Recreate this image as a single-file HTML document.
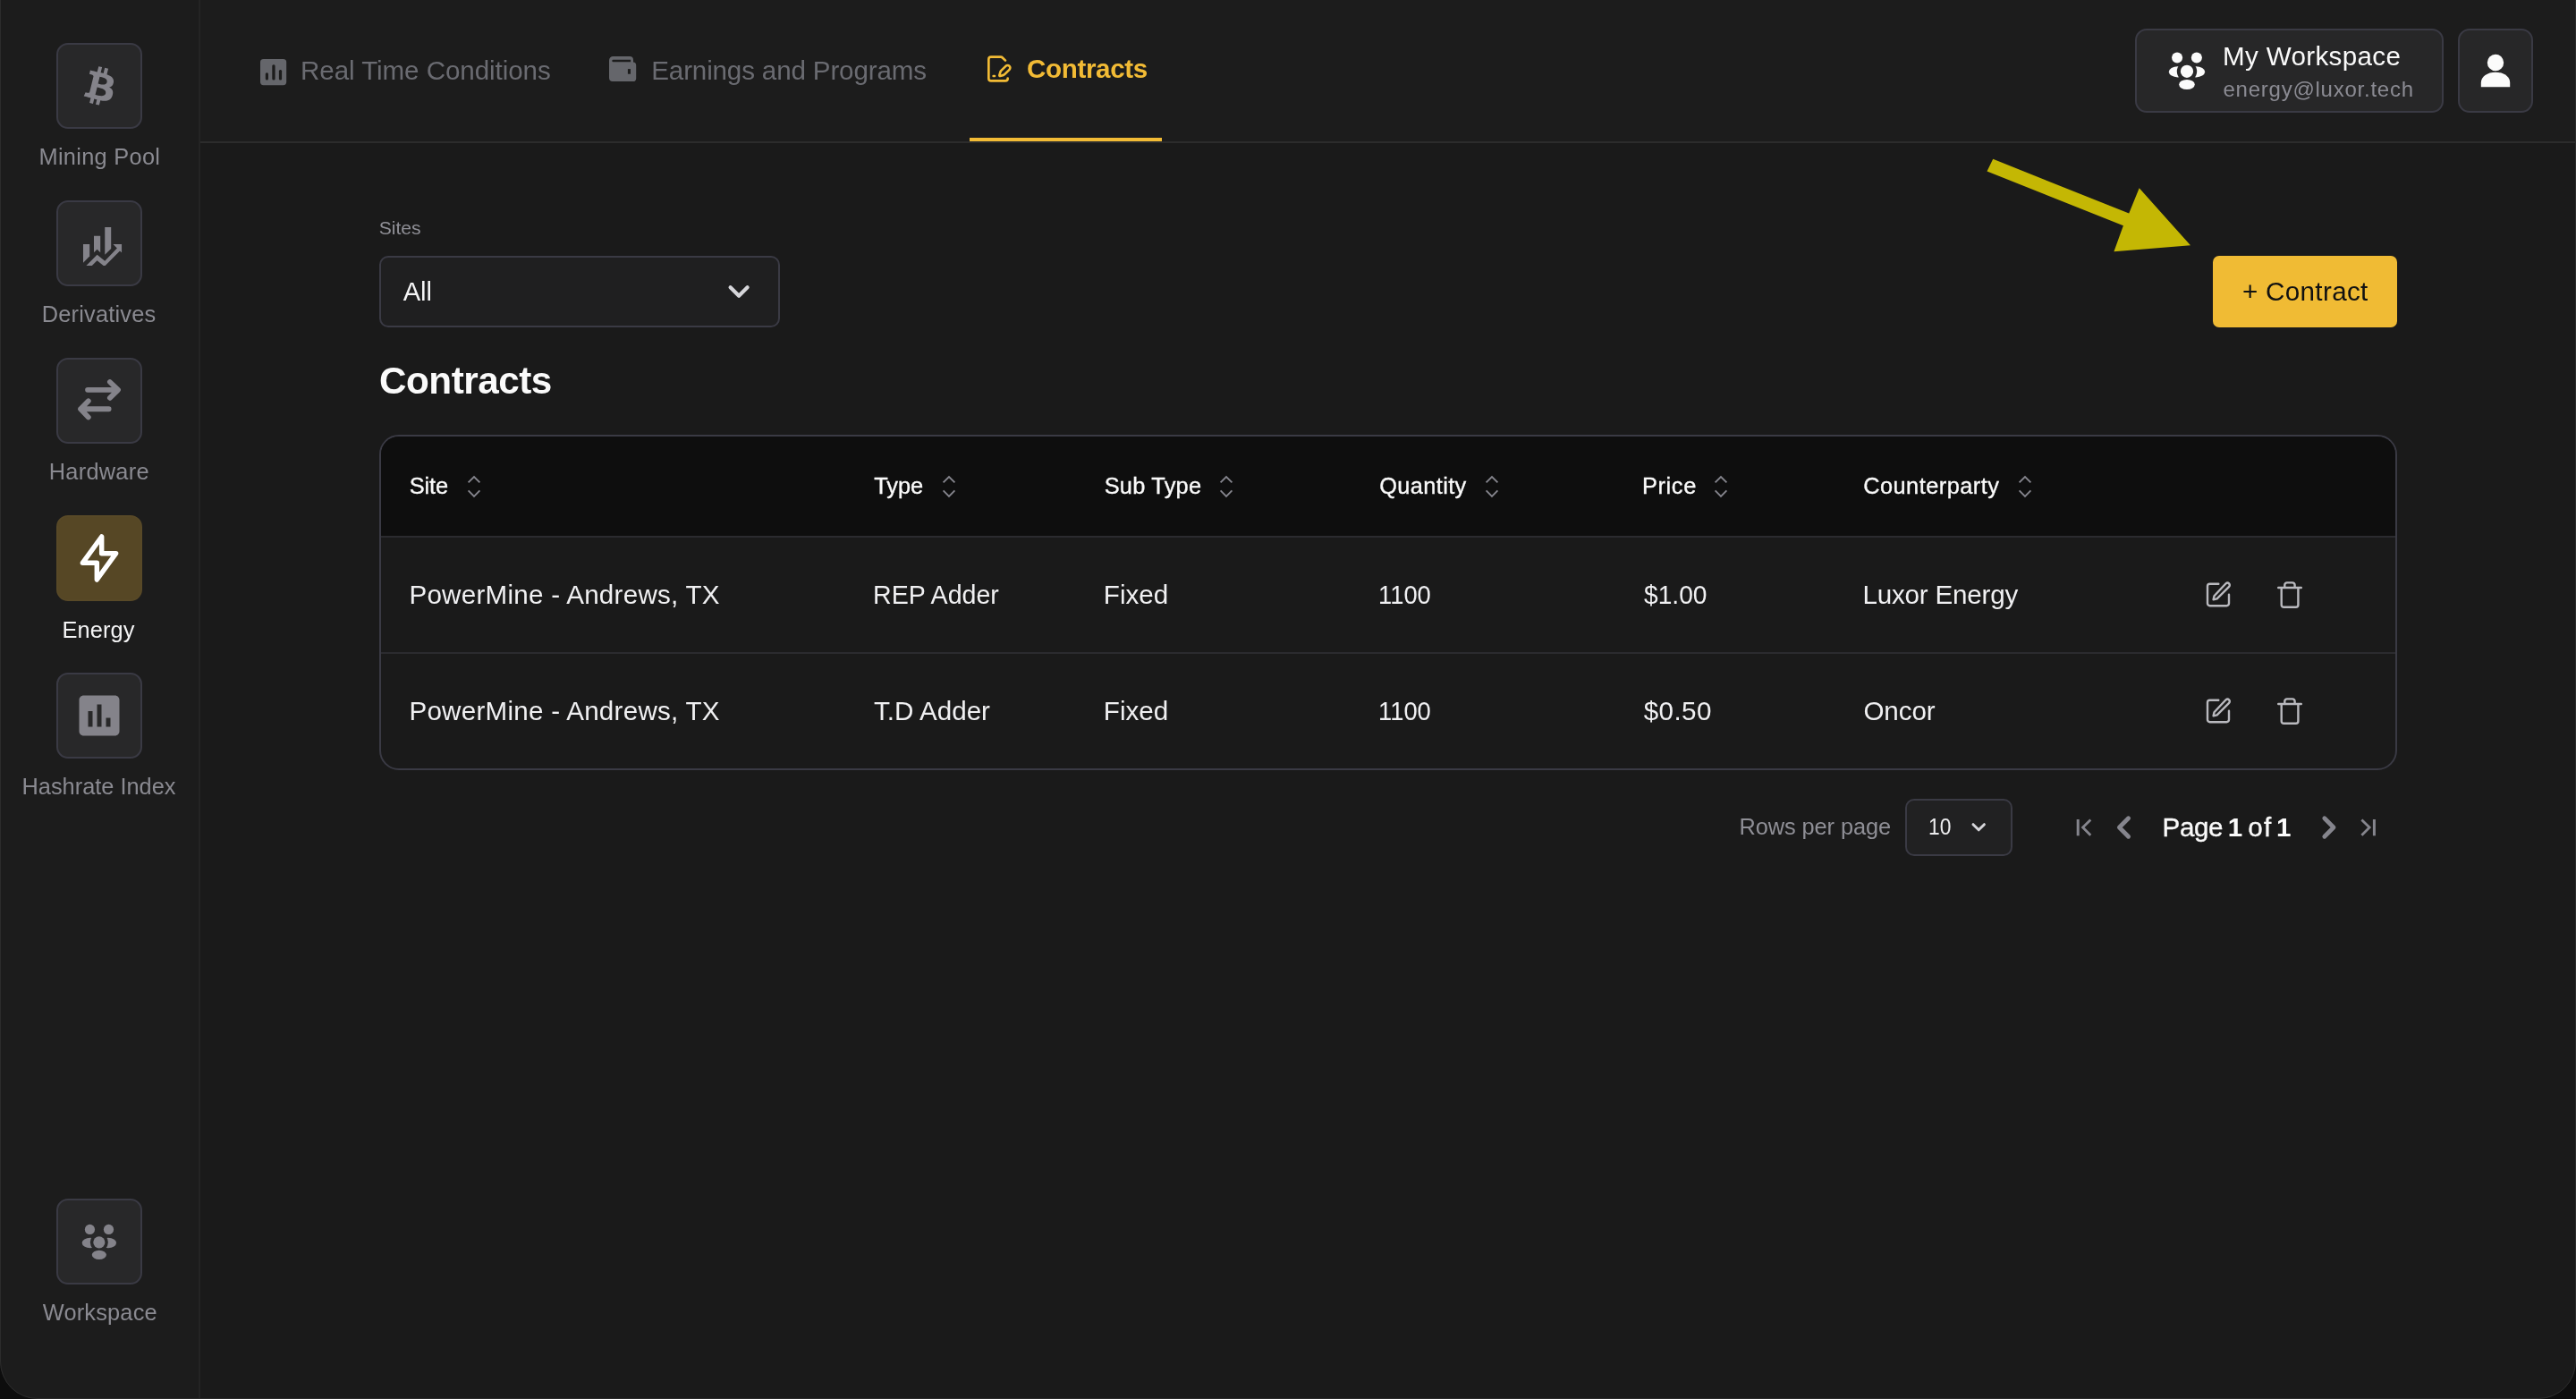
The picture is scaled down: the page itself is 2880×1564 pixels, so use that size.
<!DOCTYPE html>
<html lang="en">
<head>
<meta charset="utf-8">
<title>Contracts - Energy</title>
<style>
*{box-sizing:border-box;}
html,body{margin:0;padding:0;background:#101010;}
body{width:2880px;height:1564px;position:relative;overflow:hidden;font-family:"Liberation Sans",sans-serif;}
#app{will-change:transform;position:absolute;left:0;top:0;width:2880px;height:1564px;background:#1a1a1a;overflow:hidden;}
#frame{position:absolute;left:0;top:-2px;width:2880px;height:1566px;border:1px solid #2c2c2c;border-radius:0 0 42px 42px;box-shadow:0 0 0 80px #0d0d0d;pointer-events:none;}
.abs{position:absolute;}
.t{position:absolute;white-space:nowrap;margin:0;padding:0;}
#side{position:absolute;left:0;top:0;width:224px;height:1564px;background:#1c1c1c;border-right:2px solid #242424;}
#head{position:absolute;left:224px;top:0;width:2656px;height:160px;background:#1c1c1c;border-bottom:2px solid #2c2c2c;}
.ib{position:absolute;left:63px;width:96px;height:96px;border:2px solid #3a3a44;border-radius:13px;background:#282829;}
.ib.on{background:#564725;border-color:#584927;}
.box{position:absolute;border:2px solid #3a3a44;background:#272728;}
svg{position:absolute;overflow:visible;}
</style>
</head>
<body>
<div id="app">
<div id="side"></div>
<div id="head"></div>

<!-- sidebar icon boxes -->
<div class="ib" style="top:48px"></div>
<div class="ib" style="top:224px"></div>
<div class="ib" style="top:400px"></div>
<div class="ib on" style="top:576px"></div>
<div class="ib" style="top:752px"></div>
<div class="ib" style="top:1340px"></div>

<!-- bitcoin (tilted) -->
<svg style="left:63px;top:48px" width="96" height="96" viewBox="0 0 96 96"><g transform="translate(48.3 48.05) rotate(14) scale(0.0821) translate(-178 -256)" fill="#84838a"><path d="M310.204 242.638c27.73-14.18 45.377-39.39 41.28-81.3-5.358-57.351-52.458-76.573-114.85-81.929V0h-48.528v77.203c-12.605 0-25.525.315-38.444.63V0h-48.528v79.409c-17.842.539-38.622.276-97.37 0v51.678c38.314-.678 58.417-3.14 63.023 21.427v217.429c-2.925 19.492-18.524 16.685-53.255 16.071L3.765 443.68c88.481 0 97.37.315 97.37.315V512h48.528v-67.06c13.234.315 26.154.315 38.444.315V512h48.528v-68.005c81.299-4.412 135.647-24.894 142.895-101.467 5.671-61.446-23.32-88.862-69.326-99.89zM150.608 134.553c27.415 0 113.126-8.507 113.126 48.528 0 54.515-85.71 48.212-113.126 48.212v-96.74zm0 251.776V279.821c32.772 0 133.127-9.138 133.127 53.255-.001 60.186-100.355 53.253-133.127 53.253z"/></g></svg>

<!-- derivatives (bars + trend arrow), coords in 12.49x zoom px relative to (56,216) -->
<svg style="left:56px;top:216px" width="112" height="112" viewBox="0 0 1399 1399" fill="#84838a">
<polygon points="462,712 552,712 552,880 462,970"/>
<polygon points="612,598 702,598 702,828 657,785 612,828"/>
<polygon points="765,475 852,475 852,775 765,860"/>
<polygon points="505,1012 657,860 765,945 935,768 880,712 1000,712 1000,830 975,805 770,1012 745,1012 657,940 585,1012"/>
</svg>

<!-- hardware: exchange arrows -->
<svg style="left:56px;top:392px" width="112" height="112" viewBox="0 0 1399 1399" fill="none" stroke="#84838a" stroke-width="72" stroke-linecap="round" stroke-linejoin="round">
<path d="M525 548H948M835 437L950 548L835 660"/>
<path d="M820 815H427M535 702L425 815L535 930"/>
</svg>

<!-- energy: bolt (tabler) 64px centered at (111,624) -->
<svg style="left:79px;top:592px" width="64" height="64" viewBox="0 0 24 24" fill="none" stroke="#ffffff" stroke-width="2.05" stroke-linecap="round" stroke-linejoin="round"><path d="M13 3v7h6l-8 11v-7H5l8-11z"/></svg>

<!-- hashrate index: insert_chart 60px centered at (111,800) -->
<svg style="left:81px;top:770px" width="60" height="60" viewBox="0 0 24 24" fill="#84838a"><path d="M19 3H5c-1.1 0-2 .9-2 2v14c0 1.100.9 2 2 2h14c1.100 0 2-.9 2-2V5c0-1.100-.9-2-2-2zM9 17H7v-7h2v7zm4 0h-2V7h2v10zm4 0h-2v-4h2v4z"/></svg>

<!-- workspace icon (sidebar) coords in 12.49x zoom px relative to (56,1332) -->
<svg style="left:56px;top:1332px" width="112" height="112" viewBox="0 0 1399 1399" fill="#84838a">
<defs><mask id="wm1" maskUnits="userSpaceOnUse" x="0" y="0" width="1399" height="1399"><rect width="1399" height="1399" fill="#fff"/><circle cx="685" cy="710" r="125" fill="#000"/></mask></defs>
<circle cx="555" cy="530" r="70"/><circle cx="818" cy="530" r="70"/>
<circle cx="685" cy="710" r="82"/>
<ellipse cx="685" cy="885" rx="101" ry="65"/>
<g mask="url(#wm1)"><ellipse cx="560" cy="718" rx="114" ry="71"/><ellipse cx="811" cy="718" rx="114" ry="71"/></g>
</svg>

<!-- tab 1 icon: chart square -->
<svg style="left:280px;top:56px" width="48" height="48" viewBox="280 56 48 48">
<rect x="291" y="66" width="29.2" height="29.2" rx="3.6" fill="#65666b"/>
<g fill="#1c1c1c"><rect x="296.8" y="81.2" width="3.2" height="8.2" rx="1.5"/><rect x="304.3" y="72.3" width="3.3" height="17.1" rx="1.5"/><rect x="311.9" y="78.1" width="3.2" height="11.3" rx="1.5"/></g>
</svg>

<!-- tab 2 icon: wallet -->
<svg style="left:672px;top:56px" width="48" height="48" viewBox="672 56 48 48">
<path fill="#65666b" d="M685.5 63H704a4 4 0 0 1 4 4v2.600a3.600 3.600 0 0 1 3.200 3.600V87.400a3.600 3.600 0 0 1-3.600 3.600H685a4 4 0 0 1-4-4V67.500A4.500 4.500 0 0 1 685.500 63z"/>
<path fill="#1c1c1c" d="M685.600 66.700H705.100V69.300H685.600a1.300 1.300 0 0 1 0-2.600z"/>
<rect fill="#1c1c1c" x="701.900" y="77.100" width="3.100" height="5.600"/>
</svg>

<!-- tab 3 icon: file-pen-line (lucide) 32px at (1100,60.5) -->
<svg style="left:1100px;top:60.500px" width="32" height="32" viewBox="0 0 24 24" fill="none" stroke="#f2bb35" stroke-width="2" stroke-linecap="round" stroke-linejoin="round">
<path d="m18 5-2.414-2.414A2 2 0 0 0 14.172 2H6a2 2 0 0 0-2 2v16a2 2 0 0 0 2 2h12a2 2 0 0 0 2-2"/>
<path d="M21.378 12.626a1 1 0 0 0-3.004-3.004l-4.010 4.012a2 2 0 0 0-.506.854l-.837 2.870a.5.5 0 0 0 .620.620l2.870-.837a2 2 0 0 0 .854-.506z"/>
<path d="M8 18h1"/>
</svg>
<!-- active tab underline -->
<div class="abs" style="left:1084px;top:154px;width:215px;height:4px;background:#f2bb35"></div>

<!-- workspace selector -->
<div class="box" style="left:2387px;top:32px;width:345px;height:94px;border-radius:13px"></div>
<svg style="left:2380px;top:20px" width="112" height="112" viewBox="0 0 801.500 801.500" fill="#fbfbfb">
<defs><mask id="wm2" maskUnits="userSpaceOnUse" x="0" y="0" width="802" height="802"><rect width="802" height="802" fill="#fff"/><circle cx="465" cy="428" r="80" fill="#000"/></mask></defs>
<circle cx="387" cy="318" r="43"/><circle cx="543" cy="318" r="43"/>
<circle cx="465" cy="428" r="51"/>
<ellipse cx="465" cy="533" rx="63" ry="40"/>
<g mask="url(#wm2)"><ellipse cx="392" cy="432" rx="71" ry="43"/><ellipse cx="538" cy="432" rx="71" ry="43"/></g>
</svg>

<!-- user button -->
<div class="box" style="left:2748px;top:32px;width:84px;height:94px;border-radius:13px"></div>
<svg style="left:2760px;top:50px" width="60" height="60" viewBox="2760 50 60 60" fill="#fbfbfb">
<circle cx="2790" cy="70" r="9.200"/>
<path d="M2773.800 97.200V92.500C2773.800 85.500 2781 80.700 2790 80.700S2806.200 85.500 2806.200 92.500V97.200z"/>
</svg>

<!-- Sites select -->
<div class="box" style="left:424px;top:286px;width:448px;height:80px;border-radius:10px;background:#1f1f20"></div>
<svg style="left:800px;top:306px" width="48" height="40" viewBox="800 306 48 40" fill="none" stroke="#d6d6da" stroke-width="4.200" stroke-linecap="round" stroke-linejoin="round"><path d="M816.600 321.200L826.100 330.700L835.600 321.200"/></svg>

<!-- + Contract button -->
<div class="abs" style="left:2474px;top:286px;width:206px;height:80px;border-radius:7px;background:#f0bb34"></div>

<!-- annotation arrow -->
<svg style="left:2200px;top:160px" width="280" height="140" viewBox="2200 160 280 140"><polygon fill="#c4b704" points="2228.200,177.800 2380.200,238.600 2391.700,210.300 2449,274.300 2363.400,281.200 2373.900,252.200 2221.500,191.400"/></svg>

<!-- table -->
<div class="abs" style="left:424px;top:486px;width:2256px;height:375px;border:2px solid #3a3a44;border-radius:22px;background:#1a1a1a;overflow:hidden">
  <div class="abs" style="left:0;top:0;width:2252px;height:111px;background:#0e0e0e"></div>
  <div class="abs" style="left:0;top:111px;width:2252px;height:2px;background:#2b2b2f"></div>
  <div class="abs" style="left:0;top:241px;width:2252px;height:2px;background:#2b2b2f"></div>
</div>

<svg style="left:517.9px;top:524px" width="24" height="40" viewBox="517.9 524 24 40" fill="none" stroke="#85858d" stroke-width="1.9" stroke-linejoin="miter"><path d="M523.5 539.400L529.9 533L536.3 539.400M523.5 548.400L529.9 554.800L536.3 548.400"/></svg>
<svg style="left:1048.7px;top:524px" width="24" height="40" viewBox="1048.7 524 24 40" fill="none" stroke="#85858d" stroke-width="1.9" stroke-linejoin="miter"><path d="M1054.3 539.400L1060.7 533L1067.1 539.400M1054.3 548.400L1060.7 554.800L1067.1 548.400"/></svg>
<svg style="left:1358.9px;top:524px" width="24" height="40" viewBox="1358.9 524 24 40" fill="none" stroke="#85858d" stroke-width="1.9" stroke-linejoin="miter"><path d="M1364.5 539.400L1370.9 533L1377.3 539.400M1364.5 548.400L1370.9 554.800L1377.3 548.400"/></svg>
<svg style="left:1656.0px;top:524px" width="24" height="40" viewBox="1656.0 524 24 40" fill="none" stroke="#85858d" stroke-width="1.9" stroke-linejoin="miter"><path d="M1661.6 539.400L1668.0 533L1674.4 539.400M1661.6 548.400L1668.0 554.800L1674.4 548.400"/></svg>
<svg style="left:1911.7px;top:524px" width="24" height="40" viewBox="1911.7 524 24 40" fill="none" stroke="#85858d" stroke-width="1.9" stroke-linejoin="miter"><path d="M1917.3 539.400L1923.7 533L1930.1 539.400M1917.3 548.400L1923.7 554.800L1930.1 548.400"/></svg>
<svg style="left:2251.7px;top:524px" width="24" height="40" viewBox="2251.7 524 24 40" fill="none" stroke="#85858d" stroke-width="1.9" stroke-linejoin="miter"><path d="M2257.3 539.400L2263.7 533L2270.1 539.400M2257.3 548.400L2263.7 554.800L2270.1 548.400"/></svg>
<svg style="left:2456px;top:640px" width="130" height="50" viewBox="2456 640 130 50" fill="none" stroke="#b9b9be" stroke-width="2.400" stroke-linecap="round" stroke-linejoin="round">
<path d="M2480.300 652.700H2470.600a2.600 2.600 0 0 0-2.600 2.600V674.600a2.600 2.600 0 0 0 2.600 2.600H2489.400a2.600 2.600 0 0 0 2.600-2.600V664.600"/>
<path d="M2488.600 652.300a2.450 2.450 0 0 1 3.500 3.500L2478.600 669.300L2474.600 670.300L2475.500 666.200z"/>
<path d="M2547.200 657H2572.800M2554.300 657V654a2.600 2.600 0 0 1 2.600-2.600H2563a2.600 2.600 0 0 1 2.600 2.600V657M2550.700 657V676.200a2.600 2.600 0 0 0 2.600 2.600H2566.800a2.600 2.600 0 0 0 2.600-2.600V657"/>
</svg>
<svg style="left:2456px;top:770px" width="130" height="50" viewBox="2456 640 130 50" fill="none" stroke="#b9b9be" stroke-width="2.400" stroke-linecap="round" stroke-linejoin="round">
<path d="M2480.300 652.700H2470.600a2.600 2.600 0 0 0-2.600 2.600V674.600a2.600 2.600 0 0 0 2.600 2.600H2489.400a2.600 2.600 0 0 0 2.600-2.600V664.600"/>
<path d="M2488.600 652.300a2.450 2.450 0 0 1 3.500 3.500L2478.600 669.300L2474.600 670.300L2475.500 666.200z"/>
<path d="M2547.200 657H2572.800M2554.300 657V654a2.600 2.600 0 0 1 2.600-2.600H2563a2.600 2.600 0 0 1 2.600 2.600V657M2550.700 657V676.200a2.600 2.600 0 0 0 2.600 2.600H2566.800a2.600 2.600 0 0 0 2.600-2.600V657"/>
</svg>
<!-- rows per page select -->
<div class="box" style="left:2130px;top:893px;width:120px;height:64px;border-radius:10px;background:#212122"></div>
<svg style="left:2196px;top:908px" width="32" height="32" viewBox="2196 908 32 32" fill="none" stroke="#d6d6da" stroke-width="3" stroke-linecap="round" stroke-linejoin="round"><path d="M2206 921.700L2212.200 927.800L2218.400 921.700"/></svg>
<!-- pager icons -->
<svg style="left:2310px;top:900px" width="360" height="50" viewBox="2310 900 360 50" fill="none" stroke="#85858d">
<path stroke-width="3" d="M2323.200 916V934.300"/>
<path stroke-width="2.800" d="M2337.300 916.400L2328.600 925.100L2337.300 933.800"/>
<path stroke-width="4.800" stroke-linejoin="round" stroke-linecap="round" d="M2379.600 914.800L2369.400 925L2379.600 935.200"/>
<path stroke-width="4.800" stroke-linejoin="round" stroke-linecap="round" d="M2598.800 914.800L2609 925L2598.800 935.200"/>
<path stroke-width="2.800" d="M2640.400 916.400L2649.100 925.100L2640.400 933.800"/>
<path stroke-width="3" d="M2654.400 916V934.300"/>
</svg>

<div class="t" style="left:43.49px;top:161px;font-size:25.37px;line-height:28px;color:#8a8a91;letter-spacing:0.292px;">Mining Pool</div>
<div class="t" style="left:46.68px;top:337px;font-size:25.37px;line-height:28px;color:#8a8a91;letter-spacing:0.212px;">Derivatives</div>
<div class="t" style="left:54.67px;top:513px;font-size:25.37px;line-height:28px;color:#8a8a91;letter-spacing:0.286px;">Hardware</div>
<div class="t" style="left:69.45px;top:690px;font-size:25.37px;line-height:28px;color:#f4f4f5;letter-spacing:0.112px;">Energy</div>
<div class="t" style="left:24.49px;top:865px;font-size:25.37px;line-height:28px;color:#8a8a91;">Hashrate Index</div>
<div class="t" style="left:47.81px;top:1453px;font-size:25.37px;line-height:28px;color:#8a8a91;letter-spacing:0.177px;">Workspace</div>
<div class="t" style="left:336.00px;top:62px;font-size:29.6px;line-height:33px;color:#6a6b71;letter-spacing:-0.079px;">Real Time Conditions</div>
<div class="t" style="left:728.28px;top:62px;font-size:29.6px;line-height:33px;color:#6a6b71;letter-spacing:-0.157px;">Earnings and Programs</div>
<div class="t" style="left:1148.00px;top:60px;font-size:29.6px;line-height:33px;color:#f2bb35;font-weight:700;letter-spacing:-0.363px;">Contracts</div>
<div class="t" style="left:2485.00px;top:46px;font-size:29.6px;line-height:33px;color:#fafafa;letter-spacing:0.343px;">My Workspace</div>
<div class="t" style="left:2485.50px;top:86px;font-size:24px;line-height:27px;color:#8b8b93;letter-spacing:0.755px;">energy@luxor.tech</div>
<div class="t" style="left:423.70px;top:243px;font-size:21.14px;line-height:23px;color:#8f8f96;letter-spacing:-0.005px;">Sites</div>
<div class="t" style="left:450.64px;top:310px;font-size:29.2px;line-height:32px;color:#f4f4f5;letter-spacing:-0.047px;">All</div>
<div class="t" style="left:424.00px;top:402px;font-size:42.28px;line-height:47px;color:#fafafa;font-weight:700;letter-spacing:-0.502px;">Contracts</div>
<div class="t" style="left:2506.88px;top:309px;font-size:29.6px;line-height:33px;color:#111111;letter-spacing:0.340px;">+ Contract</div>
<div class="t" style="left:457.79px;top:529px;font-size:25.37px;line-height:28px;color:#fafafa;letter-spacing:-0.128px;-webkit-text-stroke:0.35px #fafafa;">Site</div>
<div class="t" style="left:977.16px;top:529px;font-size:25.37px;line-height:28px;color:#fafafa;-webkit-text-stroke:0.35px #fafafa;">Type</div>
<div class="t" style="left:1234.64px;top:529px;font-size:25.37px;line-height:28px;color:#fafafa;letter-spacing:0.253px;-webkit-text-stroke:0.35px #fafafa;">Sub Type</div>
<div class="t" style="left:1542.24px;top:529px;font-size:25.37px;line-height:28px;color:#fafafa;letter-spacing:0.370px;-webkit-text-stroke:0.35px #fafafa;">Quantity</div>
<div class="t" style="left:1836.00px;top:529px;font-size:25.37px;line-height:28px;color:#fafafa;letter-spacing:0.615px;-webkit-text-stroke:0.35px #fafafa;">Price</div>
<div class="t" style="left:2083.14px;top:529px;font-size:25.37px;line-height:28px;color:#fafafa;letter-spacing:0.476px;-webkit-text-stroke:0.35px #fafafa;">Counterparty</div>
<div class="t" style="left:457.40px;top:648px;font-size:29.6px;line-height:33px;color:#f0f0f2;letter-spacing:0.255px;">PowerMine - Andrews, TX</div>
<div class="t" style="left:975.61px;top:648px;font-size:29.6px;line-height:33px;color:#f0f0f2;transform:scaleX(0.9658);transform-origin:0 0;">REP Adder</div>
<div class="t" style="left:1233.78px;top:648px;font-size:29.6px;line-height:33px;color:#f0f0f2;letter-spacing:0.045px;">Fixed</div>
<div class="t" style="left:1541.17px;top:648px;font-size:29.6px;line-height:33px;color:#f0f0f2;transform:scaleX(0.9237);transform-origin:0 0;">1100</div>
<div class="t" style="left:1838.00px;top:648px;font-size:29.6px;line-height:33px;color:#f0f0f2;transform:scaleX(0.9526);transform-origin:0 0;">$1.00</div>
<div class="t" style="left:2082.40px;top:648px;font-size:29.6px;line-height:33px;color:#f0f0f2;letter-spacing:-0.188px;">Luxor Energy</div>
<div class="t" style="left:457.40px;top:778px;font-size:29.6px;line-height:33px;color:#f0f0f2;letter-spacing:0.255px;">PowerMine - Andrews, TX</div>
<div class="t" style="left:977.01px;top:778px;font-size:29.6px;line-height:33px;color:#f0f0f2;">T.D Adder</div>
<div class="t" style="left:1233.78px;top:778px;font-size:29.6px;line-height:33px;color:#f0f0f2;letter-spacing:0.045px;">Fixed</div>
<div class="t" style="left:1541.17px;top:778px;font-size:29.6px;line-height:33px;color:#f0f0f2;transform:scaleX(0.9237);transform-origin:0 0;">1100</div>
<div class="t" style="left:1837.74px;top:778px;font-size:29.6px;line-height:33px;color:#f0f0f2;letter-spacing:0.411px;">$0.50</div>
<div class="t" style="left:2083.42px;top:778px;font-size:29.6px;line-height:33px;color:#f0f0f2;letter-spacing:-0.078px;">Oncor</div>
<div class="t" style="left:1944.49px;top:910px;font-size:25.37px;line-height:28px;color:#8f8f96;letter-spacing:-0.080px;">Rows per page</div>
<div class="t" style="left:2155.51px;top:910px;font-size:25.37px;line-height:28px;color:#ececee;transform:scaleX(0.9002);transform-origin:0 0;">10</div>
<div class="t" style="left:2417.58px;top:908px;font-size:29.6px;line-height:33px;color:#fafafa;letter-spacing:-0.424px;-webkit-text-stroke:0.35px #fafafa;">Page</div>
<div class="t" style="left:2490.71px;top:908px;font-size:29.6px;line-height:33px;color:#fafafa;font-weight:700;">1</div>
<div class="t" style="left:2513.16px;top:908px;font-size:29.6px;line-height:33px;color:#fafafa;letter-spacing:1.351px;-webkit-text-stroke:0.35px #fafafa;">of</div>
<div class="t" style="left:2545.10px;top:908px;font-size:29.6px;line-height:33px;color:#fafafa;font-weight:700;">1</div>
<div id="frame"></div>
</div>
</body>
</html>
